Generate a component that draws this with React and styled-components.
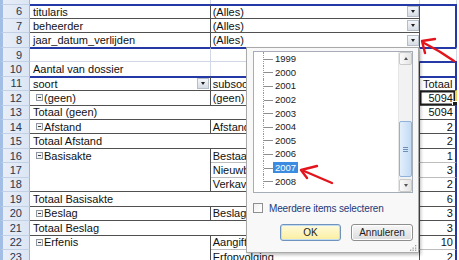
import React from 'react';
import styled, { createGlobalStyle, css } from 'styled-components';

const GlobalStyle = createGlobalStyle`
  html, body { margin: 0; padding: 0; background: #fff; }
  body { font-family: "Liberation Sans", Arial, sans-serif; }
  #root { width: 459px; height: 260px; overflow: hidden; }
`;

const C = {
  dark: '#505050',
  light: '#bdbdbd',
  grid: '#d0d7e5',
  blue: '#2438a6',
};

const line = (t) => {
  if (!t || t === 'none') return 'none';
  if (t === 'blue') return `2px solid ${C.blue}`;
  return `1px solid ${C[t]}`;
};

const Sheet = styled.div`
  position: relative;
  width: 459px;
  height: 260px;
  overflow: hidden;
  background: #fff;
`;

const Row = styled.div`
  display: grid;
  grid-template-columns: 30px 180.7px 209.3px 37px 1fr;
  height: ${(p) => p.$h}px;
`;

const RowHead = styled.div`
  box-sizing: border-box;
  background: linear-gradient(to right, #e8eef8, #dbe5f3);
  border-left: 3px solid #a2bee4;
  border-right: 1px solid #9eb6ce;
  border-top: ${(p) => (p.$first ? 'none' : '1px solid #c2d1e5')};
  display: flex;
  align-items: center;
  justify-content: flex-end;
  padding-right: 7px;
  font-size: 11px;
  color: #28364c;
  overflow: hidden;
`;

const Cell = styled.div`
  box-sizing: border-box;
  grid-column: span ${(p) => p.$span || 1};
  border-top: ${(p) => line(p.$t)};
  border-right: ${(p) => line(p.$r)};
  display: flex;
  align-items: center;
  justify-content: ${(p) => (p.$right ? 'flex-end' : 'flex-start')};
  padding: 0 ${(p) => (p.$right ? 2 : p.$drop ? 0 : 0)}px 0 ${(p) => p.$indent}px;
  font-size: 11px;
  color: #111;
  white-space: nowrap;
  overflow: hidden;
  position: relative;
  ${(p) =>
    p.$active &&
    css`
      overflow: visible;
      border-right: 2px solid #e7d25a;
      box-shadow: inset 0 0 0 1.5px #1c1c1c;
      &::after {
        content: '';
        position: absolute;
        right: -3px;
        bottom: -2px;
        width: 4px;
        height: 4px;
        background: #1c1c1c;
        border: 1px solid #fff;
      }
    `}
`;

const Toggle = styled.span`
  box-sizing: border-box;
  width: 7px;
  height: 7px;
  border: 1px solid #8f96a0;
  background: #f4f4f4;
  margin-right: 1px;
  flex-shrink: 0;
  display: flex;
  align-items: center;
  justify-content: center;
  &::after {
    content: '';
    width: 3px;
    height: 1px;
    background: #3a3a3a;
  }
`;

const DropBtn = styled.span`
  box-sizing: border-box;
  margin-left: auto;
  margin-right: ${(p) => p.$mr || 0}px;
  width: 12px;
  height: 11px;
  flex-shrink: 0;
  border: 1px solid #b5bdc9;
  background: linear-gradient(#f5f7fa, #d6dce5);
  display: flex;
  align-items: center;
  justify-content: center;
  &::after {
    content: '';
    border-left: 2.5px solid transparent;
    border-right: 2.5px solid transparent;
    border-top: 3px solid #1e1e1e;
  }
`;

/* ---------- filter popup ---------- */

const Popup = styled.div`
  position: absolute;
  left: 246px;
  top: 47px;
  width: 173px;
  height: 206px;
  box-sizing: border-box;
  background: #f8f8f8;
  border: 1px solid #a9a9a9;
  box-shadow: 2px 2px 3px rgba(0, 0, 0, 0.25);
  padding: 3px 5px 0 6px;
  display: flex;
  flex-direction: column;
  font-family: "Liberation Sans", Arial, sans-serif;
`;

const ListBox = styled.div`
  box-sizing: border-box;
  height: 142px;
  border: 1px solid #a7adb6;
  background: #fff;
  display: flex;
`;

const Items = styled.div`
  flex: 1;
  padding-left: 9px;
  overflow: hidden;
`;

const Item = styled.div`
  height: 13.6px;
  display: flex;
  align-items: stretch;
  font-size: 9.5px;
  color: #1a1a1a;
`;

const Branch = styled.span`
  width: 9px;
  flex-shrink: 0;
  border-left: 1px dotted #9a9a9a;
  position: relative;
  &::after {
    content: '';
    position: absolute;
    left: 0;
    right: 0;
    top: 50%;
    height: 1px;
    background: #8e8e8e;
  }
`;

const Year = styled.span`
  display: flex;
  align-items: center;
  padding: 0 2px;
  margin: 1px 0;
  ${(p) =>
    p.$selected &&
    css`
      background: #3b8ce0;
      color: #fff;
    `}
`;

const ScrollBar = styled.div`
  width: 13px;
  display: flex;
  flex-direction: column;
  background: #f2f2f2;
  border-left: 1px solid #e6e6e6;
`;

const ScrollBtn = styled.div`
  box-sizing: border-box;
  height: 13px;
  border: 1px solid #c9c9c9;
  border-radius: 2px;
  background: linear-gradient(to right, #fafafa, #e4e4e4);
  display: flex;
  align-items: center;
  justify-content: center;
  &::after {
    content: '';
    border-left: 2.5px solid transparent;
    border-right: 2.5px solid transparent;
    ${(p) =>
      p.$up
        ? css`border-bottom: 3px solid #555;`
        : css`border-top: 3px solid #555;`}
  }
`;

const Thumb = styled.div`
  box-sizing: border-box;
  margin-top: 56px;
  height: 56px;
  border: 1px solid #8fb2da;
  border-radius: 2px;
  background: linear-gradient(to right, #e3effb, #c3dbf4);
  display: flex;
  align-items: center;
  justify-content: center;
`;

const Grip = styled.span`
  width: 5px;
  height: 5px;
  border-top: 1px solid #6f8fb5;
  border-bottom: 1px solid #6f8fb5;
  box-sizing: border-box;
  position: relative;
  &::after {
    content: '';
    position: absolute;
    left: 0;
    right: 0;
    top: 1px;
    height: 1px;
    background: #6f8fb5;
  }
`;

const Track = styled.div`
  flex: 1;
`;

const CheckRow = styled.label`
  display: flex;
  align-items: center;
  margin-top: 10px;
  height: 10px;
  font-size: 10px;
  color: #1d3a78;
  letter-spacing: -0.15px;
`;

const CheckBox = styled.span`
  box-sizing: border-box;
  width: 10px;
  height: 10px;
  border: 1px solid #8e8f8f;
  background: linear-gradient(135deg, #f0f0f0, #ffffff);
  margin-right: 6px;
`;

const Buttons = styled.div`
  display: flex;
  justify-content: flex-end;
  gap: 10px;
  margin-top: 11px;
`;

const Button = styled.button`
  box-sizing: border-box;
  height: 17px;
  width: ${(p) => p.$w}px;
  padding: 0;
  font-family: "Liberation Sans", Arial, sans-serif;
  font-size: 10px;
  color: #1c1c1c;
  border-radius: 3px;
  ${(p) =>
    p.$primary
      ? css`
          border: 1px solid #6f93bd;
          background: linear-gradient(#fffbdc, #fbee9f);
          box-shadow: inset 0 0 0 1px #c2dcf2;
        `
      : css`
          border: 1px solid #8e8e8e;
          background: linear-gradient(#f7f7f7, #dcdcdc);
          box-shadow: inset 0 0 0 1px #ffffff;
        `}
`;

const ResizeGrip = styled.svg`
  position: absolute;
  right: 1px;
  bottom: 1px;
`;

const Overlay = styled.svg`
  position: absolute;
  left: 0;
  top: 0;
  pointer-events: none;
`;

/* ---------- data ---------- */

const H = 14.44;

const item = (a, b, c) => [
  { t: 'dark', r: 'dark', text: a, item: true },
  { t: 'dark', r: 'dark', text: b },
  { t: 'dark', r: 'blue', text: c, right: true },
];
const inner = (b, c) => [
  { t: 'none', r: 'dark' },
  { t: 'light', r: 'dark', text: b },
  { t: 'light', r: 'blue', text: c, right: true },
];
const total = (a, c) => [
  { t: 'dark', r: 'dark', text: a, span: 2 },
  { t: 'dark', r: 'blue', text: c, right: true },
];

const rows = [
  { n: '', h: 3.5, first: true, cells: [{ r: 'grid' }, { r: 'grid' }, { r: 'grid' }] },
  {
    n: 6,
    cells: [
      { t: 'blue', r: 'dark', text: 'titularis' },
      { t: 'blue', r: 'dark', text: '(Alles)', drop: true },
      { t: 'blue', r: 'blue' },
    ],
  },
  {
    n: 7,
    cells: [
      { t: 'dark', r: 'dark', text: 'beheerder' },
      { t: 'dark', r: 'dark', text: '(Alles)', drop: true },
      { r: 'blue' },
    ],
  },
  {
    n: 8,
    cells: [
      { t: 'dark', r: 'dark', text: 'jaar_datum_verlijden' },
      { t: 'dark', r: 'dark', text: '(Alles)', drop: true },
      { r: 'blue' },
    ],
  },
  {
    n: 9,
    cells: [
      { t: 'blue', r: 'grid' },
      { t: 'blue', r: 'grid' },
      { t: 'blue', r: 'grid' },
    ],
  },
  {
    n: 10,
    cells: [
      { t: 'grid', r: 'grid', text: 'Aantal van dossier' },
      { t: 'grid', r: 'blue' },
      { t: 'blue', r: 'blue' },
    ],
  },
  {
    n: 11,
    cells: [
      { t: 'blue', r: 'dark', text: 'soort', drop: true, mr: 1 },
      { t: 'blue', r: 'dark', text: 'subsoort' },
      { t: 'blue', r: 'blue', text: 'Totaal' },
    ],
  },
  {
    n: 12,
    cells: [
      { t: 'dark', r: 'dark', text: '(geen)', item: true },
      { t: 'dark', r: 'dark', text: '(geen)' },
      { t: 'dark', r: 'blue', text: '5094', right: true, active: true },
    ],
  },
  { n: 13, cells: total('Totaal (geen)', '5094') },
  { n: 14, cells: item('Afstand', 'Afstand', '2') },
  { n: 15, cells: total('Totaal Afstand', '2') },
  { n: 16, cells: item('Basisakte', 'Bestaande woning', '1') },
  { n: 17, cells: inner('Nieuwbouw', '3') },
  { n: 18, cells: inner('Verkaveling', '2') },
  { n: 19, cells: total('Totaal Basisakte', '6') },
  { n: 20, cells: item('Beslag', 'Beslag', '3') },
  { n: 21, cells: total('Totaal Beslag', '3') },
  { n: 22, cells: item('Erfenis', 'Aangifte nalatenschap', '10') },
  { n: 23, cells: inner('Erfopvolging', '2') },
];

const years = ['1999', '2000', '2001', '2002', '2003', '2004', '2005', '2006', '2007', '2008'];

export default function App() {
  return (
    <>
      <GlobalStyle />
      <Sheet>
        {rows.map((row, i) => (
          <Row key={i} $h={row.h || H}>
            <RowHead $first={row.first}>{row.n}</RowHead>
            {row.cells.map((c, j) => (
              <Cell
                key={j}
                $t={c.t}
                $r={c.r}
                $span={c.span}
                $right={c.right}
                $active={c.active}
                $indent={c.item ? 6 : j === 1 ? 2 : 3}
              >
                {c.item && <Toggle />}
                {c.text}
                {c.drop && <DropBtn $mr={c.mr} />}
              </Cell>
            ))}
            <Cell $indent={0} />
          </Row>
        ))}

        <Popup>
          <ListBox>
            <Items>
              {years.map((y) => (
                <Item key={y}>
                  <Branch />
                  <Year $selected={y === '2007'}>{y}</Year>
                </Item>
              ))}
            </Items>
            <ScrollBar>
              <ScrollBtn $up />
              <Track>
                <Thumb>
                  <Grip />
                </Thumb>
              </Track>
              <ScrollBtn />
            </ScrollBar>
          </ListBox>
          <CheckRow>
            <CheckBox />
            Meerdere items selecteren
          </CheckRow>
          <Buttons>
            <Button $primary $w={61}>OK</Button>
            <Button $w={62}>Annuleren</Button>
          </Buttons>
          <ResizeGrip width="8" height="8" viewBox="0 0 8 8">
            <g fill="#9a9a9a">
              <rect x="6" y="2" width="1.3" height="1.3" />
              <rect x="3.5" y="4.5" width="1.3" height="1.3" />
              <rect x="6" y="4.5" width="1.3" height="1.3" />
              <rect x="1" y="6.6" width="1.3" height="1.3" />
              <rect x="3.5" y="6.6" width="1.3" height="1.3" />
              <rect x="6" y="6.6" width="1.3" height="1.3" />
            </g>
          </ResizeGrip>
        </Popup>

        <Overlay width="459" height="260" viewBox="0 0 459 260">
          <g stroke="#e3141c" strokeWidth="2.4" fill="none" strokeLinecap="round" strokeLinejoin="round">
            <path d="M454 61 Q440 51 424 43" />
            <path d="M435 39 L422 41 L425 53" />
            <path d="M332 183 Q318 177 304 171" />
            <path d="M317 166 L301 170 L307 178" />
          </g>
        </Overlay>
      </Sheet>
    </>
  );
}
